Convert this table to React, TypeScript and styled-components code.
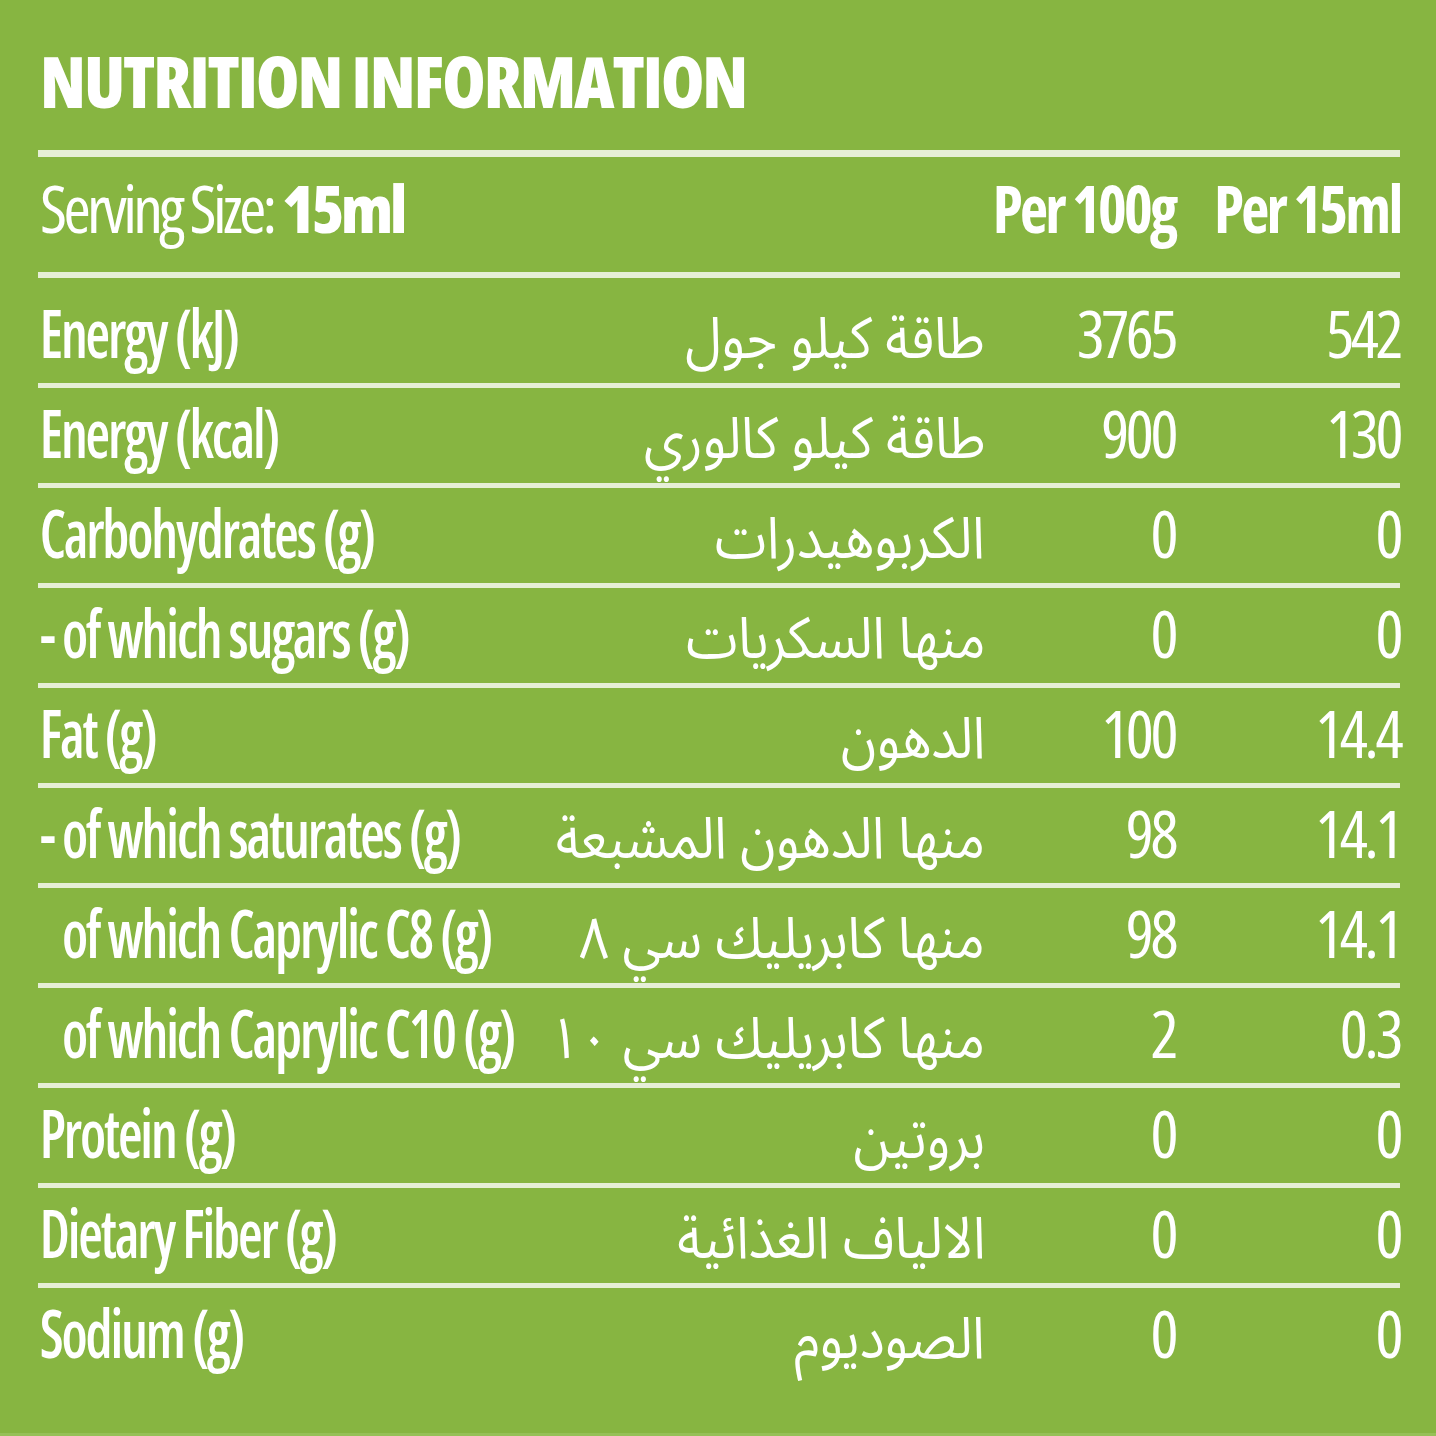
import React from "react";
import styled, { createGlobalStyle } from "styled-components";

const GlobalStyle = createGlobalStyle`
  html, body { margin: 0; padding: 0; background: #87b541; }
  #root { min-height: 1436px; }
`;

const Page = styled.div`
  box-sizing: border-box;
  width: 1436px;
  height: 1436px;
  background: #87b541;
  border-bottom: 3px solid #96c057;
  padding: 46px 36px 0 38px;
  color: #ffffff;
  font-family: "Open Sans", "Noto Sans", sans-serif;
  font-stretch: 75%;
`;

const Title = styled.h1`
  margin: 0 0 34px 2px;
  font-size: 70px;
  line-height: 70px;
  font-weight: 800;
  font-stretch: 87.5%;
  letter-spacing: -2px;
  white-space: nowrap;
`;

const Rule = styled.div<{ $thick: number }>`
  height: ${(p) => p.$thick}px;
  background: #e6efd6;
`;

const Grid = styled.div`
  display: grid;
  grid-template-columns: minmax(0, 1fr) 420px 190px 225px;
  align-items: baseline;
`;

const HeaderRow = styled(Grid)`
  box-sizing: border-box;
  height: 115px;
  padding-top: 17px;
`;

const Row = styled(Grid)<{ $first?: boolean; $last?: boolean }>`
  box-sizing: border-box;
  height: ${(p) => (p.$last ? 95 : 100)}px;
  margin-top: ${(p) => (p.$first ? 10 : 0)}px;
  padding-top: 11px;
  border-bottom: ${(p) => (p.$last ? "none" : "5px solid #e6efd6")};
`;

const Label = styled.div<{ $indent?: boolean }>`
  padding-left: ${(p) => (p.$indent ? 28 : 2)}px;
  font-size: 66px;
  line-height: 66px;
  font-weight: 600;
  letter-spacing: -2.5px;
  white-space: nowrap;
  transform: scaleX(0.855);
  transform-origin: left center;
`;

const ServingLabel = styled.div`
  padding-left: 2px;
  font-size: 66px;
  line-height: 66px;
  font-weight: 500;
  letter-spacing: -3.7px;
  white-space: nowrap;
`;

const Strong = styled.span`
  font-weight: 800;
  letter-spacing: -3.2px;
`;

const Arabic = styled.div`
  justify-self: end;
  direction: rtl;
  text-align: right;
  font-family: "Noto Sans Arabic", "DejaVu Sans", sans-serif;
  font-stretch: 100%;
  font-size: 58px;
  line-height: 66px;
  font-weight: 400;
  white-space: nowrap;
  transform: scaleX(0.9);
  transform-origin: right center;
`;

const Num = styled.div`
  justify-self: end;
  text-align: right;
  font-size: 66px;
  line-height: 66px;
  font-weight: 500;
  letter-spacing: -3.5px;
  white-space: nowrap;
`;

const HeadNum = styled(Num)`
  font-weight: 700;
  letter-spacing: -3px;
  transform: scaleX(0.93);
  transform-origin: right center;
`;

type Item = {
  en: string;
  ar: string;
  a: string;
  b: string;
  indent?: boolean;
};

const items: Item[] = [
  { en: "Energy (kJ)", ar: "طاقة كيلو جول", a: "3765", b: "542" },
  { en: "Energy (kcal)", ar: "طاقة كيلو كالوري", a: "900", b: "130" },
  { en: "Carbohydrates (g)", ar: "الكربوهيدرات", a: "0", b: "0" },
  { en: "- of which sugars (g)", ar: "منها السكريات", a: "0", b: "0" },
  { en: "Fat (g)", ar: "الدهون", a: "100", b: "14.4" },
  { en: "- of which saturates (g)", ar: "منها الدهون المشبعة", a: "98", b: "14.1" },
  { en: "of which Caprylic C8 (g)", ar: "منها كابريليك سي ٨", a: "98", b: "14.1", indent: true },
  { en: "of which Caprylic C10 (g)", ar: "منها كابريليك سي ١٠", a: "2", b: "0.3", indent: true },
  { en: "Protein (g)", ar: "بروتين", a: "0", b: "0" },
  { en: "Dietary Fiber (g)", ar: "الالياف الغذائية", a: "0", b: "0" },
  { en: "Sodium (g)", ar: "الصوديوم", a: "0", b: "0" },
];

export default function App() {
  return (
    <>
      <GlobalStyle />
      <Page>
        <Title>NUTRITION INFORMATION</Title>
        <Rule $thick={7} />
        <HeaderRow>
          <ServingLabel>
            Serving Size: <Strong>15ml</Strong>
          </ServingLabel>
          <span />
          <HeadNum>Per 100g</HeadNum>
          <HeadNum>Per 15ml</HeadNum>
        </HeaderRow>
        <Rule $thick={6} />
        {items.map((it, i) => (
          <Row key={it.en} $first={i === 0} $last={i === items.length - 1}>
            <Label $indent={it.indent}>{it.en}</Label>
            <Arabic>{it.ar}</Arabic>
            <Num>{it.a}</Num>
            <Num>{it.b}</Num>
          </Row>
        ))}
      </Page>
    </>
  );
}
